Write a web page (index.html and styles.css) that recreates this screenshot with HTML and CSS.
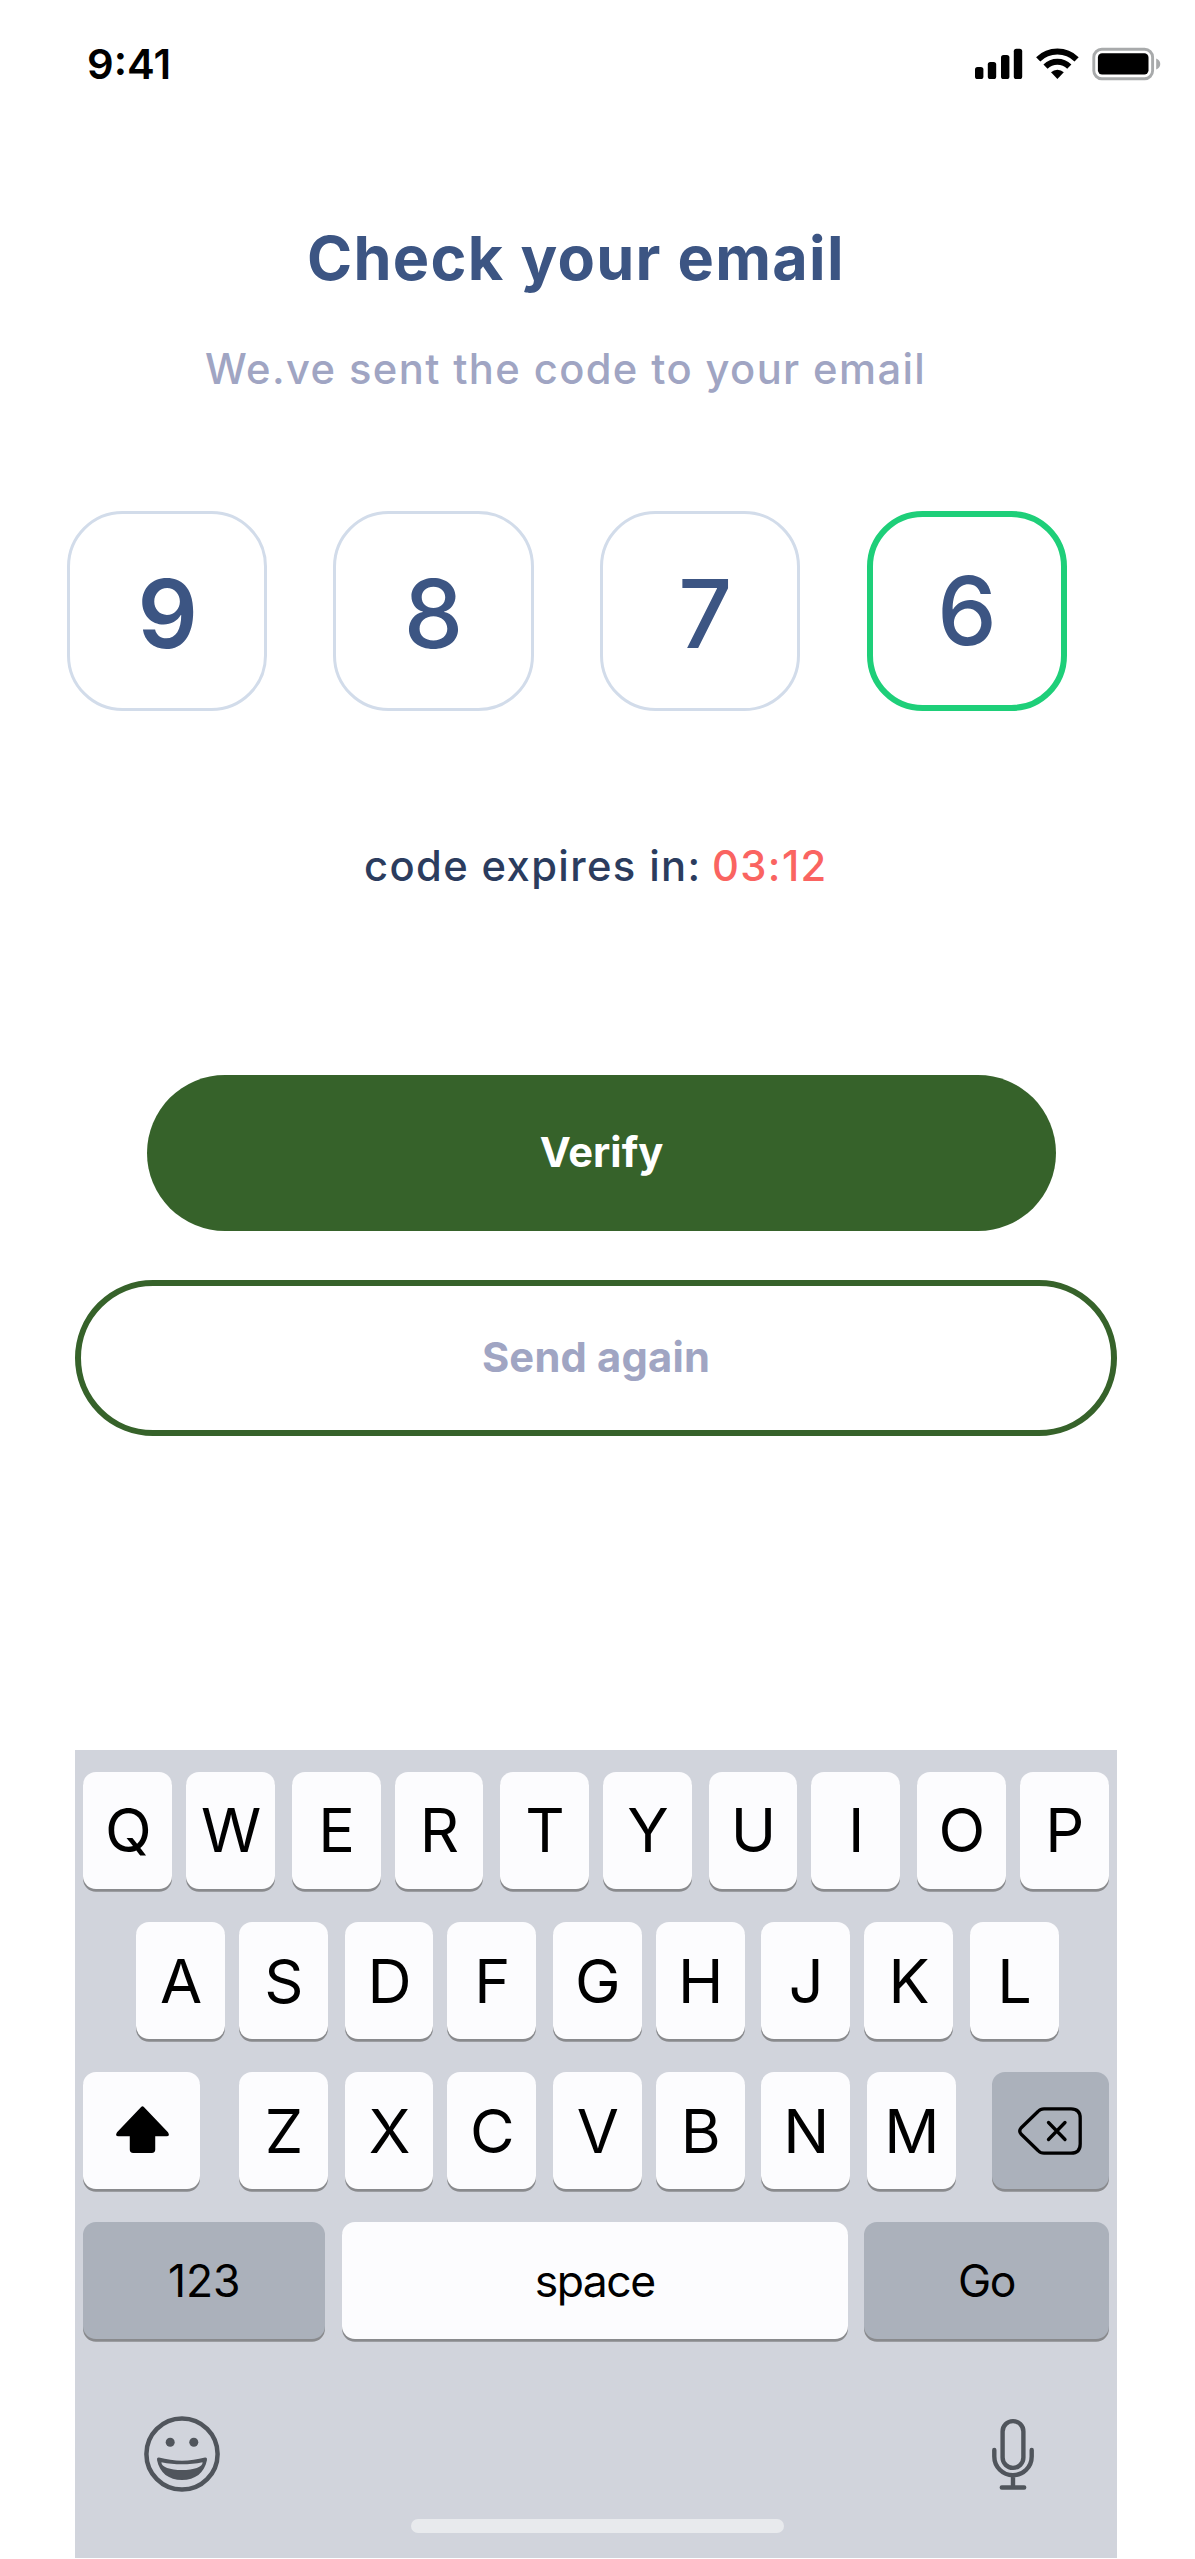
FILE: index.html
```
<!DOCTYPE html>
<html lang="en">
<head>
<meta charset="utf-8">
<title>Check your email</title>
<link rel="stylesheet" href="styles.css">
</head>
<body>
<header class="status">
  <span class="time">9:41</span>
  <svg class="status-icons" viewBox="0 0 188 36" aria-hidden="true">
    <rect x="1" y="21" width="8.4" height="12" rx="2.6"/>
    <rect x="13.8" y="16" width="8.4" height="17" rx="2.6"/>
    <rect x="27" y="9" width="8.4" height="24" rx="2.6"/>
    <rect x="39.8" y="2.7" width="8.4" height="30.3" rx="2.6"/>
    <g fill="none" stroke="#000" stroke-width="6">
      <path d="M64.2 13.3a27.6 27.6 0 0 1 38.4 0"/>
      <path d="M71.5 20.6a17.2 17.2 0 0 1 23.8 0"/>
    </g>
    <path d="M77 26.3a9.4 9.4 0 0 1 12.8 0L83.4 33z"/>
    <rect x="119.8" y="3.3" width="58.8" height="29.4" rx="8" fill="none" stroke="#a8aaab" stroke-width="2.9"/>
    <rect x="123.9" y="7.3" width="50.6" height="21.2" rx="4.2"/>
    <path d="M182.2 12.4c5.4 2 5.4 9 0 11z" fill="#a8aaab"/>
  </svg>
</header>

<main class="verify">
  <h1 class="title">Check your email</h1>
  <p class="subtitle">We.ve sent the code to your email</p>
  <div class="code">
    <span class="digit digit-filled">9</span>
    <span class="digit">8</span>
    <span class="digit digit-seven">7</span>
    <span class="digit digit-active">6</span>
  </div>
  <p class="expiry">code expires in: <span class="countdown">03:12</span></p>
  <button class="btn btn-primary">Verify</button>
  <button class="btn btn-outline">Send again</button>
</main>

<section class="keyboard">
  <div class="row row-full">
    <span class="key">Q</span><span class="key">W</span><span class="key">E</span><span class="key">R</span><span class="key">T</span><span class="key">Y</span><span class="key">U</span><span class="key">I</span><span class="key">O</span><span class="key">P</span>
  </div>
  <div class="row row-home">
    <span class="key">A</span><span class="key">S</span><span class="key">D</span><span class="key">F</span><span class="key">G</span><span class="key">H</span><span class="key">J</span><span class="key">K</span><span class="key">L</span>
  </div>
  <div class="row row-shift">
    <span class="key key-shift">
      <svg class="icon-shift" viewBox="0 0 54 48" aria-hidden="true"><path d="M25.6 1Q27 -.3 28.4 1L53 26.8Q55.500 31 51.500 31H40V44.500Q40 48 36.500 48H17.500Q14 48 14 44.500V31H2.500Q-1.500 31 1 26.800Z"/></svg>
    </span>
    <span class="key">Z</span><span class="key">X</span><span class="key">C</span><span class="key">V</span><span class="key">B</span><span class="key">N</span><span class="key">M</span>
    <span class="key key-dark key-delete">
      <svg class="icon-delete" viewBox="0 0 64 48" aria-hidden="true"><g fill="none" stroke="#000" stroke-width="3.300" stroke-linecap="round" stroke-linejoin="round"><path d="M26 1.800H53Q62.200 1.800 62.200 11V37Q62.200 46.200 53 46.200H26Q22.500 46.200 20 43.500L3 27Q.500 24 3 21L20 4.500Q22.500 1.800 26 1.800Z"/><path d="M30.500 15.500 47 32.500M47 15.500 30.500 32.500"/></g></svg>
    </span>
  </div>
  <div class="row row-bottom">
    <span class="key key-dark key-text key-num">123</span>
    <span class="key key-text key-space">space</span>
    <span class="key key-dark key-text key-go">Go</span>
  </div>
  <div class="tools">
    <svg class="icon-emoji" viewBox="0 0 76 76" aria-hidden="true">
      <circle cx="38" cy="38" r="35.600" fill="none" stroke="#50555c" stroke-width="4.500"/>
      <circle cx="26.200" cy="26.200" r="4.500" fill="#50555c"/>
      <circle cx="49.800" cy="26.200" r="4.500" fill="#50555c"/>
      <path fill="#50555c" fill-rule="evenodd" d="M15 41.600C30 45.700 46 45.700 61 41.600Q63.400 41.300 63 44C60.500 57 51 64 38 64S15.500 57 13 44Q12.600 41.300 15 41.600ZM17.400 46.200C17.200 51 26 54 38 54S58.800 51 58.600 46.200C45 49 31 49 17.400 46.200Z"/>
    </svg>
    <svg class="icon-mic" viewBox="0 0 42 72" aria-hidden="true">
      <g fill="none" stroke="#50555c" stroke-width="4.400" stroke-linecap="round">
        <rect x="10.600" y="3.100" width="20.800" height="46.800" rx="10.400"/>
        <path d="M2.300 32V38.500a18.700 18.700 0 0 0 37.400 0V32M21 58v11M9.800 69.500h22.400"/>
      </g>
    </svg>
  </div>
  <div class="home-bar"></div>
</section>
</body>
</html>
```
FILE: styles.css
```
/* --u is one design unit of the 430-unit wide layout */
:root {
  --u: 2.77907px;
  --navy: #3c5583;
  --muted: #a0a5c3;
  --green: #36622a;
}

* { box-sizing: border-box; }

body {
  margin: 0;
  width: 1195px;
  height: 2559px;
  overflow: hidden;
  background: #fff;
  font-family: Inter, "Liberation Sans", sans-serif;
}

.status {
  display: flex;
  align-items: center;
  justify-content: space-between;
  height: 127px;
  padding: 0 33px 0 87px;
}

.time {
  font-size: 41.69px;
  font-weight: 600;
}

.status-icons {
  width: 188px;
  height: 36px;
}

.verify {
  display: flex;
  flex-direction: column;
  align-items: flex-start;
}

.title {
  margin: 94px 0 0 307px;
  font-size: 61.14px;
  line-height: 74px;
  font-weight: 700;
  letter-spacing: 1.3px;
  color: var(--navy);
}

.subtitle {
  margin: 49px 0 0 205px;
  font-size: 41.69px;
  line-height: 50px;
  font-weight: 500;
  letter-spacing: 1.39px;
  color: var(--muted);
}

.code {
  display: flex;
  gap: calc(24 * var(--u));
  margin: 117px 0 0 calc(24 * var(--u));
}

.digit {
  display: flex;
  align-items: center;
  justify-content: center;
  width: calc(72 * var(--u));
  height: calc(72 * var(--u));
  padding-top: 5px;
  border: 3px solid #d2dcea;
  border-radius: calc(20 * var(--u));
  font-size: 94.5px;
  line-height: 114px;
  font-weight: 500;
  color: var(--navy);
}

.digit-filled { padding-left: 2px; font-weight: 600; }
.digit-seven { padding-left: 10px; }
.digit-active { padding: 0; border: 6px solid #1ecf79; }

.expiry {
  margin: 130px 0 0 364px;
  font-size: 41.69px;
  line-height: 50px;
  font-weight: 500;
  letter-spacing: 1.39px;
  color: #2b3c5e;
}

.countdown { margin-left: -2px; color: #fa6461; }

.btn {
  height: 156px;
  padding: 0 0 3px;
  border: 0;
  border-radius: 78px;
  font: 700 41.69px/50px Inter, "Liberation Sans", sans-serif;
}

.btn-primary {
  width: 909px;
  margin: 184px 0 0 147px;
  background: var(--green);
  color: #fff;
}

.btn-outline {
  width: 1042px;
  margin: 49px 0 0 75px;
  border: 6px solid var(--green);
  background: #fff;
  color: var(--muted);
  letter-spacing: .2px;
}

.keyboard {
  width: calc(375 * var(--u));
  height: 808px;
  margin: 314px 0 0 75px;
  padding-top: 22px;
  background: #d1d4dc;
}

.row {
  display: flex;
  gap: calc(5 * var(--u));
  height: calc(54 * var(--u));
  padding-left: calc(3 * var(--u));
}

.row-home { padding-left: calc(22 * var(--u)); }

.key {
  display: flex;
  align-items: center;
  justify-content: center;
  width: calc(32 * var(--u));
  height: calc(42 * var(--u));
  padding-left: 1px;
  border-radius: 13px;
  background: #fcfcfe;
  box-shadow: 0 var(--u) 0 #898a8d;
  font-size: 61.14px;
  line-height: 74px;
  color: #000;
}

/* keys sit on a 37.5-unit pitch, rounded up on every other one */
.row-full .key:nth-child(odd):not(:first-child),
.row-home .key:nth-child(odd):not(:first-child) { margin-left: var(--u); }

.row-shift .key:nth-child(3),
.row-shift .key:nth-child(5),
.row-shift .key:nth-child(7),
.row-shift .key:nth-child(8) { margin-left: var(--u); }
.row-shift .key:nth-child(2) { margin-left: calc(9 * var(--u)); }

.row-shift .key-shift { width: calc(42 * var(--u)); }
.row-shift .key-delete { width: calc(42 * var(--u)); margin-left: calc(8 * var(--u)); padding: 0; }
.key-dark { background: #abb1bb; }

.row-bottom { gap: calc(6 * var(--u)); }
.key-text { padding: 1px 0 0; font-size: 44.46px; line-height: 52px; }
.key-num { width: calc(87 * var(--u)); }
.key-space { width: calc(182 * var(--u)); letter-spacing: -1.5px; }
.key-go { width: calc(88 * var(--u)); letter-spacing: -1.5px; }

.icon-shift { width: 53px; height: 47px; margin-top: -3px; }
.icon-delete { width: 64px; height: 48px; }

.tools {
  display: flex;
  justify-content: space-between;
  align-items: center;
  height: 76px;
  margin-top: 44px;
  padding: 0 83px 0 69px;
}

.icon-emoji { width: 76px; height: 76px; }
.icon-mic { width: 42px; height: 72px; }

.home-bar {
  width: calc(134 * var(--u));
  height: calc(5 * var(--u));
  margin: 27px 0 0 calc(121 * var(--u));
  border-radius: 7px;
  background: #e8eaed;
}
```
